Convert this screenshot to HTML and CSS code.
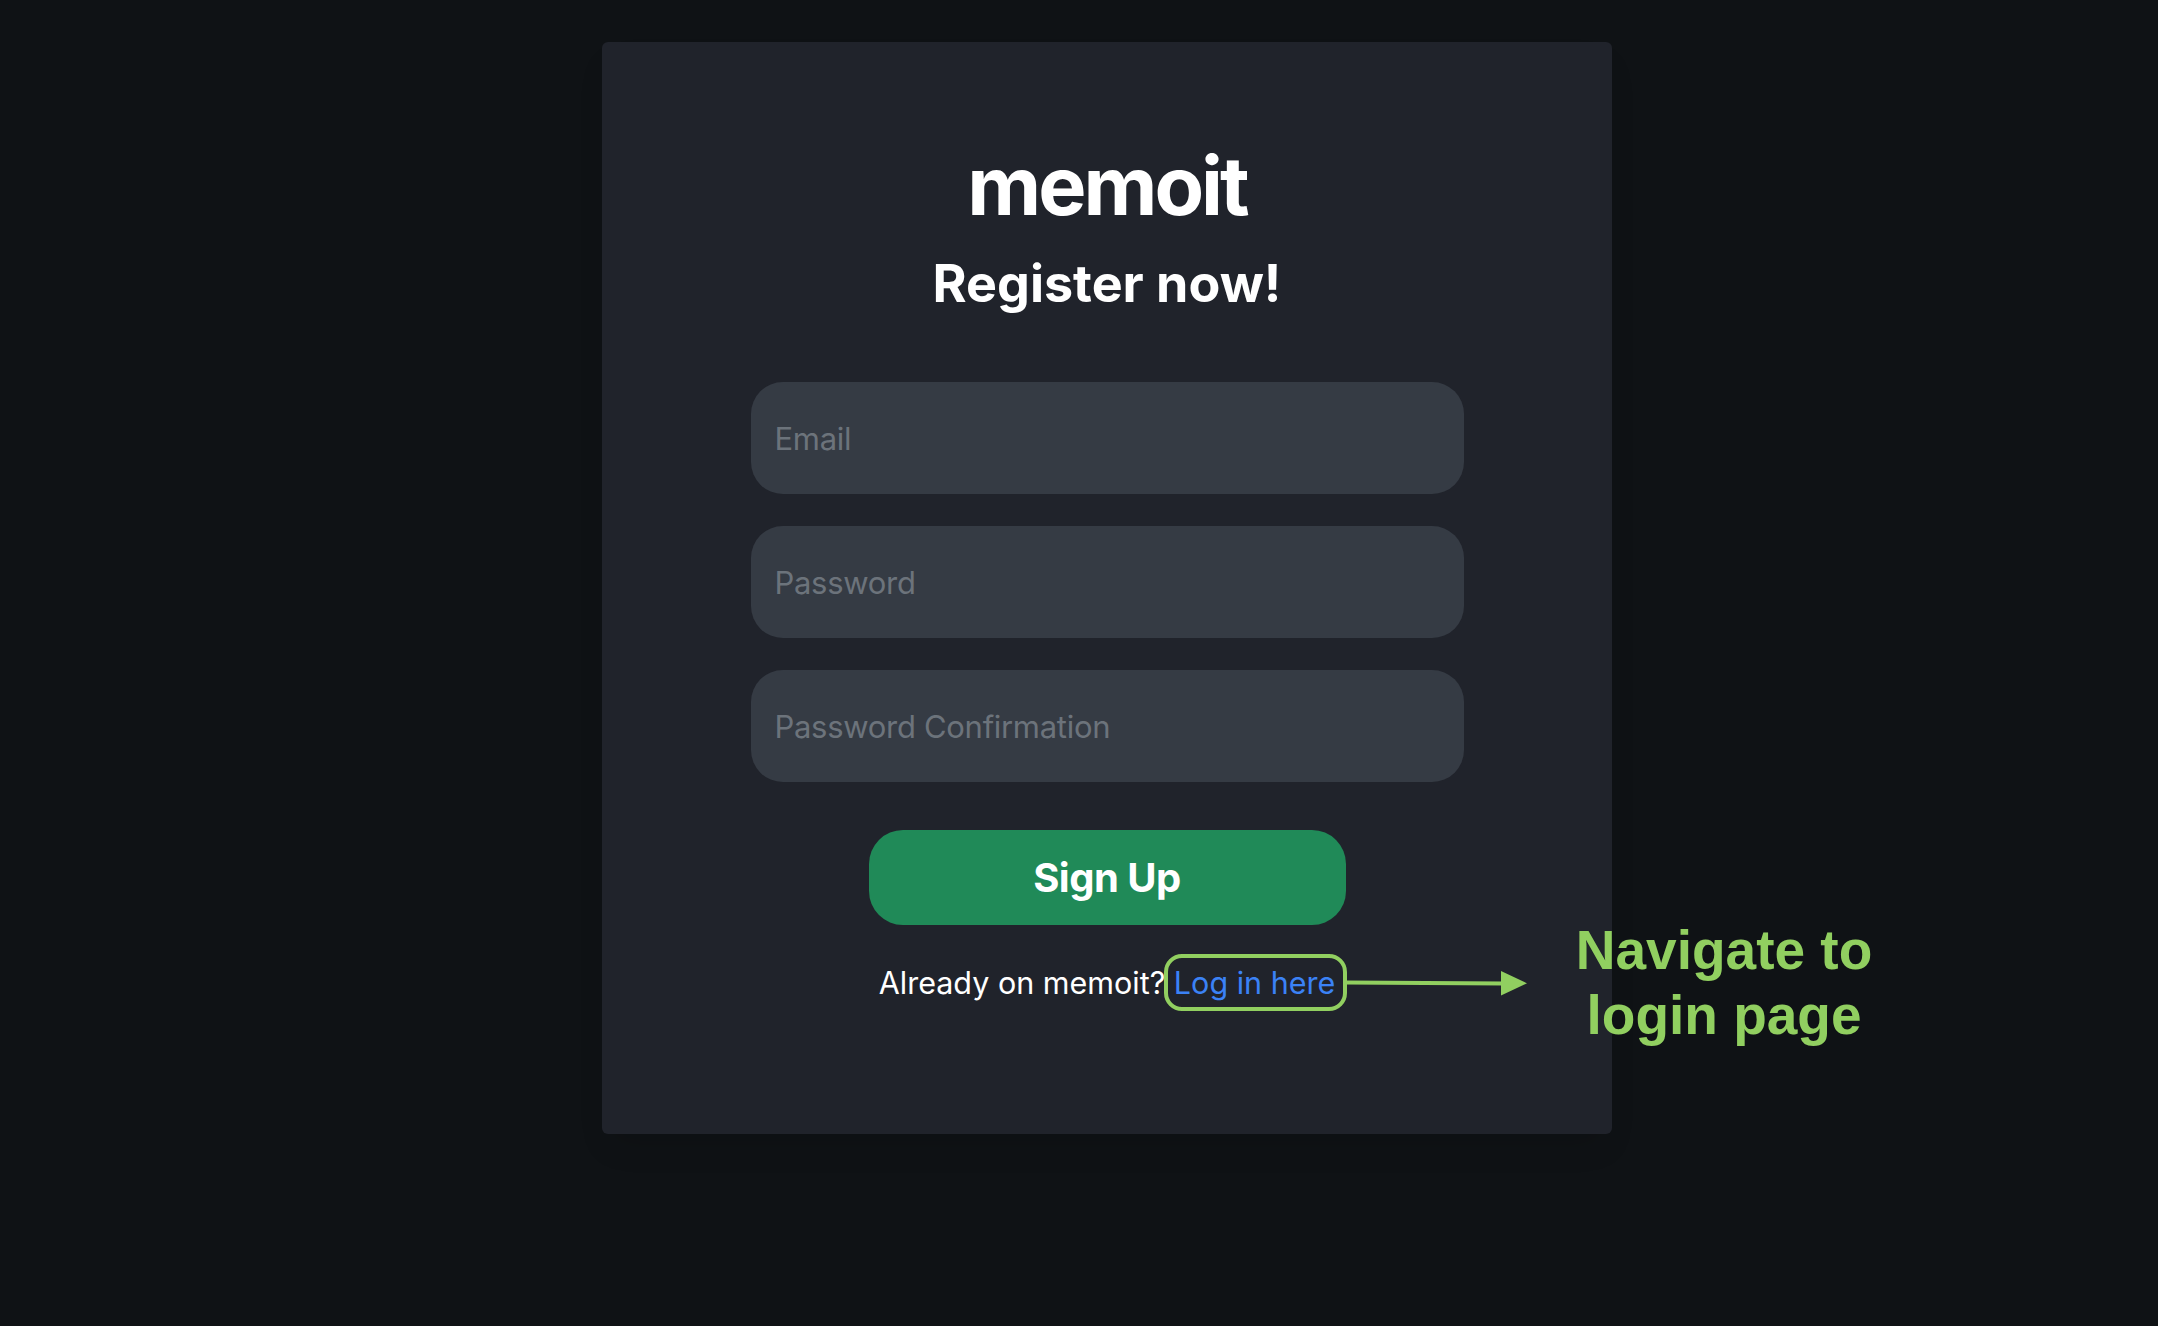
FILE: index.html
```html
<!DOCTYPE html>
<html lang="en">
<head>
<meta charset="utf-8">
<title>memoit – Register</title>
<link rel="stylesheet" href="styles.css">
</head>
<body>
<div class="page">
  <main class="card">
    <h1 class="brand">memoit</h1>
    <h2 class="title">Register now!</h2>
    <form class="form">
      <input class="field" type="email" placeholder="Email">
      <input class="field" type="password" placeholder="Password">
      <input class="field" type="password" placeholder="Password Confirmation">
      <button class="btn" type="button">Sign Up</button>
    </form>
    <p class="alt">Already on memoit? <a class="link" href="#">Log in here</a></p>
    <span class="ring"></span>
    <svg class="arrow" width="184" height="28" viewBox="0 0 184 28">
      <path d="M0 11.5 L158 12.5" stroke="#91cf60" stroke-width="4" fill="none"/>
      <path d="M155 0 L181 12.3 L155 24.5 Z" fill="#91cf60"/>
    </svg>
    <div class="note">Navigate to<br>login page</div>
  </main>
</div>
</body>
</html>
```

FILE: styles.css
```css
html, body {
  margin: 0;
  padding: 0;
  background: #0f1215;
  height: 100%;
}

body {
  font-family: Inter, "Noto Sans", "Liberation Sans", sans-serif;
  color: #ffffff;
}

.page {
  padding: 42px 0 0 602px;
}

.card {
  position: relative;
  box-sizing: border-box;
  width: 1010px;
  height: 1092px;
  background: #20232b;
  border-radius: 6px;
  padding-top: 104px;
  display: flex;
  flex-direction: column;
  align-items: center;
  box-shadow: 0 18px 30px -8px rgba(0, 0, 0, 0.12);
}

.brand {
  margin: 0;
  font-size: 81px;
  line-height: 81px;
  font-weight: 700;
  letter-spacing: -3px;
}

.title {
  margin: 31px 0 0;
  font-size: 52px;
  line-height: 52px;
  font-weight: 700;
  letter-spacing: 0;
}

.form {
  margin-top: 72px;
  display: flex;
  flex-direction: column;
  align-items: center;
  gap: 32px;
}

.field {
  box-sizing: border-box;
  width: 713px;
  height: 112px;
  border: none;
  outline: none;
  border-radius: 32px;
  background: #353b44;
  padding: 0 24px;
  font-family: Inter, "Noto Sans", sans-serif;
  font-size: 31px;
  letter-spacing: -0.3px;
  color: #e5e7eb;
}

.field::placeholder {
  color: #6c737b;
}

.btn {
  margin-top: 16px;
  width: 477px;
  height: 95px;
  border: none;
  border-radius: 34px;
  background: #208a58;
  color: #ffffff;
  font-family: Inter, "Noto Sans", sans-serif;
  font-size: 40px;
  font-weight: 700;
  letter-spacing: -0.5px;
  cursor: pointer;
}

.alt {
  margin: 38px 0 0;
  font-size: 30.5px;
  line-height: 40px;
  color: #ffffff;
}

.link {
  color: #3b82f6;
  text-decoration: none;
}

.ring {
  position: absolute;
  left: 562px;
  top: 912px;
  width: 183px;
  height: 57px;
  box-sizing: border-box;
  border: 4px solid #91cf60;
  border-radius: 18px;
}

.arrow {
  position: absolute;
  left: 744px;
  top: 929px;
}

.note {
  position: absolute;
  left: 952px;
  top: 876px;
  width: 340px;
  text-align: center;
  font-family: "Liberation Sans", Arial, sans-serif;
  font-weight: 700;
  font-size: 55px;
  line-height: 65px;
  color: #91cf60;
}
```
